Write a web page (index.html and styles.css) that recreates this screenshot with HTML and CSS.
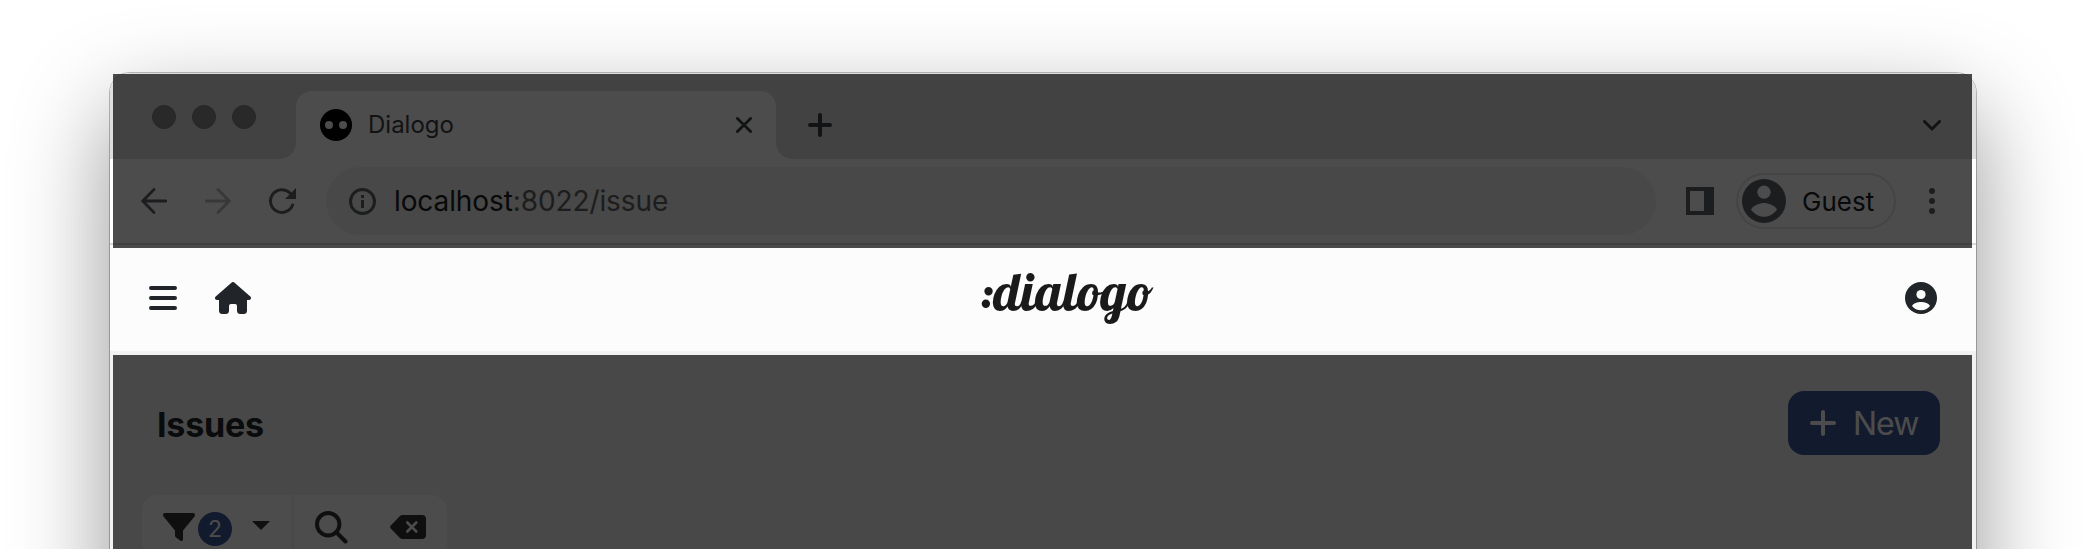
FILE: index.html
```html
<!DOCTYPE html>
<html lang="en">
<head>
<meta charset="utf-8">
<title>Dialogo</title>
<link rel="stylesheet" href="styles.css">
</head>
<body>
<div class="page">
<div class="window">
  <div class="frame">
    <div class="tabstrip">
      <div class="lights"><i></i><i></i><i></i></div>
      <div class="tab">
        <svg class="favicon" width="32" height="32" viewBox="0 0 32 32"><circle cx="16" cy="16" r="16"/><circle cx="9" cy="16" r="4" fill="#fff"/><circle cx="23" cy="16" r="4" fill="#fff"/></svg>
        <span class="tab-title">Dialogo</span>
        <svg class="tab-close" width="16" height="16" viewBox="0 0 16 16"><path d="M1.4 1.4l13.2 13.2M14.6 1.4L1.4 14.6" stroke="#3c4043" stroke-width="2.8" stroke-linecap="round"/></svg>
      </div>
      <svg class="tab-new" width="24" height="24" viewBox="0 0 24 24"><path d="M12 2v20M2 12h20" stroke="#3c4043" stroke-width="4" stroke-linecap="round"/></svg>
      <svg class="tab-menu" width="18" height="12" viewBox="0 0 18 12"><path d="M1.5 1.5L9 9l7.500-7.500" fill="none" stroke="#3c4043" stroke-width="3" stroke-linecap="round"/></svg>
    </div>
    <div class="toolbar">
      <svg class="back" width="26" height="26" viewBox="0 0 26 26"><path d="M13 1.500L1.800 13 13 24.500M2 13h23" fill="none" stroke="#5f6368" stroke-width="2.8" stroke-linecap="round"/></svg>
      <svg class="forward" width="26" height="26" viewBox="0 0 26 26"><path d="M13 1.500L24.200 13 13 24.500M24 13H1" fill="none" stroke="#babcbe" stroke-width="2.8" stroke-linecap="round"/></svg>
      <svg class="reload" width="27" height="26" viewBox="0 0 27 26"><path d="M23.600 17A11.400 11.400 0 1 1 21 5" fill="none" stroke="#5f6368" stroke-width="3" stroke-linecap="round"/><path d="M27 0v11H16z" fill="#5f6368"/></svg>
      <div class="address">
        <svg width="27" height="27" viewBox="0 0 27 27"><circle cx="13.500" cy="13.500" r="12" fill="none" stroke="#5f6368" stroke-width="3"/><path d="M12 12h3v8h-3zM12 7h3v3h-3z" fill="#5f6368"/></svg>
        <span class="url">localhost<span>:8022/issue</span></span>
      </div>
      <svg class="panel" width="28" height="28" viewBox="0 0 28 28"><path fill-rule="evenodd" d="M0 0h28v28H0zM4 4v20h14V4z" fill="#5f6368"/></svg>
      <div class="profile">
        <svg width="44" height="44" viewBox="0 0 44 44"><circle cx="22" cy="22" r="22" fill="#5f6368"/><circle cx="22" cy="13.200" r="6.600" fill="#fff"/><path d="M9 30.500c2-4 9-6.500 13-6.500s11 2.500 13 6.500c-3 4.500-8 7.300-13 7.300s-10-2.800-13-7.300z" fill="#fff"/></svg>
        <span>Guest</span>
      </div>
      <svg class="more" width="6" height="26" viewBox="0 0 6 26"><g fill="#5f6368"><circle cx="3" cy="3" r="3"/><circle cx="3" cy="13" r="3"/><circle cx="3" cy="23" r="3"/></g></svg>
    </div>
    <header class="appbar">
      <div class="appbar-left">
        <svg width="28" height="24" viewBox="0 0 28 24"><path d="M2 2h24M2 12h24M2 22h24" stroke="#212529" stroke-width="4" stroke-linecap="round"/></svg>
        <svg width="36" height="32" viewBox="0 0 36 32"><path fill="#212529" d="M16.700.5a2 2 0 0 1 2.600 0L35.300 14.600c1.400 1.200.600 3.400-1.300 3.400h-2v10.500a3.500 3.500 0 0 1-3.500 3.500h-3a3.500 3.500 0 0 1-3.500-3.500V24a2 2 0 0 0-2-2h-4a2 2 0 0 0-2 2v4.500a3.500 3.500 0 0 1-3.500 3.500h-3A3.500 3.500 0 0 1 4 28.500V18H2C.1 18-.7 15.800.7 14.600z"/></svg>
      </div>
      <div class="logo">:dialogo</div>
      <svg width="32" height="32" viewBox="0 0 32 32"><circle cx="16" cy="16" r="16" fill="#212529"/><circle cx="16" cy="12.500" r="4.600" fill="#fcfcfc"/><path d="M7 24c1.500-3 5.500-4 9-4s7.500 1 9 4c-2 2.800-5.500 4.200-9 4.200S9 26.800 7 24z" fill="#fcfcfc"/></svg>
    </header>
    <main class="content">
      <div class="heading">
        <h1>Issues</h1>
        <div class="button-new">
          <svg width="26" height="26" viewBox="0 0 26 26"><path d="M13 2v22M2 13h22" stroke="#fff" stroke-width="4" stroke-linecap="round"/></svg>
          <span>New</span>
        </div>
      </div>
      <div class="filters">
        <div class="filter">
          <svg width="32" height="28" viewBox="0 0 32 28"><path d="M2 0h28c1.800 0 2.600 2 1.500 3.400L20 17.500v9c0 1.300-1.500 2-2.500 1.200l-4.500-3.200c-.6-.4-1-1-1-1.800v-5.200L.500 3.400C-.6 2 .2 0 2 0z" fill="#333"/></svg>
          <span class="badge">2</span>
          <svg class="caret" width="18" height="9" viewBox="0 0 18 9"><path d="M0 0h18L9 9z" fill="#333"/></svg>
        </div>
        <div class="actions">
          <svg width="33" height="33" viewBox="0 0 33 33"><g fill="none" stroke="#333" stroke-width="4"><circle cx="13.200" cy="13.200" r="11.200"/><path d="M21.500 21.500l9 9" stroke-linecap="round"/></g></svg>
          <svg class="erase" width="36" height="24" viewBox="0 0 36 24"><path d="M12.500 0H32a4 4 0 0 1 4 4v16a4 4 0 0 1-4 4H12.500c-1 0-2-.4-2.800-1.200L.8 13.400a2 2 0 0 1 0-2.800L9.700 1.200C10.500.4 11.500 0 12.500 0z" fill="#333"/><path d="M17.300 7.500l9 9M26.300 7.500l-9 9" stroke="#fff" stroke-width="2.600" stroke-linecap="round"/></svg>
        </div>
      </div>
    </main>
  </div>
  <div class="dim dim-top"></div>
  <div class="dim dim-bottom"></div>
</div>
</div>
</body>
</html>
```
FILE: styles.css
```css
* { box-sizing: border-box; }
body {
  margin: 0;
  background: #fff;
  font-family: Inter, "Liberation Sans", sans-serif;
}
svg { display: block; flex: none; }

.page {
  height: 549px;
  padding: 73px 109px 0 110px;
  overflow: hidden;
}
.window {
  position: relative;
  height: 700px;
  border-radius: 20px;
  box-shadow: 0 0 0 1px rgba(0, 0, 0, .25), 0 37px 96px rgba(0, 0, 0, .42);
}
.frame {
  height: 100%;
  overflow: hidden;
  border-radius: 20px;
  background: #f2f2f2;
}

.tabstrip {
  display: flex;
  height: 86px;
  padding: 18px 35px 0 42px;
  background: #dedede;
}
.lights { display: flex; gap: 16px; padding-top: 14px; width: 144px; }
.lights i { width: 24px; height: 24px; border-radius: 50%; background: #8a8a8a; border: 1px solid #808080; }
.tab {
  position: relative;
  display: flex;
  align-items: center;
  width: 480px;
  height: 68px;
  padding: 0 24px;
  border-radius: 16px 16px 0 0;
  background: #fff;
}
/* concave feet joining the tab to the toolbar */
.tab::before, .tab::after {
  content: "";
  position: absolute;
  bottom: 0;
  width: 16px;
  height: 16px;
}
.tab::before { left: -16px; background: radial-gradient(circle at 0 0, transparent 15.500px, #fff 16px); }
.tab::after { right: -16px; background: radial-gradient(circle at 100% 0, transparent 15.500px, #fff 16px); }
.tab-title { margin-left: 16px; font-size: 24px; line-height: 30px; color: #3c4043; }
.tab-close { margin-left: auto; }
.tab-new { margin: 22px 0 0 32px; }
.tab-menu { margin: 29px 0 0 auto; }

.toolbar {
  display: flex;
  align-items: center;
  height: 86px;
  padding: 0 41px 0 31px;
  border-bottom: 2px solid #dadada;
  background: #fff;
}
.forward { margin-left: 38px; }
.reload { margin-left: 38px; }
.address {
  display: flex;
  align-items: center;
  width: 1330px;
  height: 68px;
  margin-left: 30px;
  padding-left: 23px;
  border-radius: 34px;
  background: #f0f0f0;
}
.url { margin-left: 18px; font-size: 28px; line-height: 34px; letter-spacing: -.1px; color: #202124; }
.url span { color: #636363; }
.panel { margin-left: 30px; }
.profile {
  display: flex;
  align-items: center;
  width: 160px;
  height: 56px;
  margin-left: 22px;
  padding-left: 4px;
  border: 2px solid #e4e4e4;
  border-radius: 28px;
}
.profile span { margin: 2px 0 0 16px; font-size: 26px; line-height: 32px; color: #202124; }
.more { margin-left: auto; }

.appbar {
  display: flex;
  align-items: center;
  justify-content: space-between;
  height: 106px;
  padding: 0 39px;
  background: #fcfcfc;
}
.appbar-left { display: flex; align-items: center; gap: 38px; width: 102px; }
.logo {
  margin-left: -23px;
  padding-bottom: 14px;
  font-family: Lobster, "Liberation Serif", serif;
  font-size: 53px;
  line-height: 66px;
  color: #1a1a1a;
}

.content { padding: 40px 36px 0 32px; }
.heading { display: flex; align-items: center; justify-content: space-between; height: 64px; }
.heading h1 { margin: 3px 0 0 15px; font-size: 34px; font-weight: 700; line-height: 42px; letter-spacing: -.2px; color: #212529; }
.button-new {
  display: flex;
  align-items: center;
  width: 152px;
  height: 64px;
  padding-left: 22px;
  border-radius: 16px;
  background: #3f5799;
}
.button-new span { margin: 2px 0 0 17px; font-size: 32px; line-height: 40px; letter-spacing: -1px; color: #fff; }
.filters {
  display: flex;
  width: 305px;
  height: 64px;
  margin-top: 40px;
  border-radius: 16px;
  background: #fff;
}
.filter { display: flex; align-items: flex-start; width: 152px; padding: 18px 0 0 21px; border-right: 2px solid #f2f2f2; }
.badge {
  width: 34px;
  height: 34px;
  margin: -1px 0 0 3px;
  border-radius: 50%;
  background: #3f5799;
  color: #fff;
  font-size: 23px;
  line-height: 34px;
  text-align: center;
}
.caret { margin: 8px 0 0 20px; }
.actions { display: flex; padding: 16px 0 0 21px; }
.erase { margin: 4px 0 0 42px; }

.dim { position: absolute; left: 3px; right: 4px; background: rgba(0, 0, 0, .7); }
.dim-top { top: 1px; height: 174px; }
.dim-bottom { top: 282px; bottom: 0; }
```
